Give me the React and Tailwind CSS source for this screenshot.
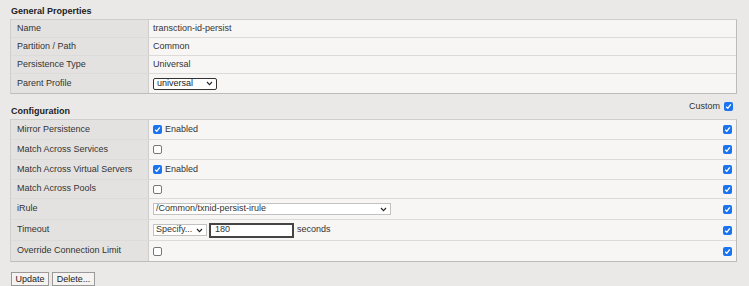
import React from 'react';

const font = { fontFamily: '"Liberation Sans", Arial, sans-serif' };

function Check({ on }) {
  if (!on) {
    return <span className="inline-block w-[9px] h-[9px] rounded-[2px] border border-[#777] bg-white shrink-0" />;
  }
  return (
    <span className="inline-flex items-center justify-center w-[9px] h-[9px] rounded-[2px] bg-[#1a73f0] shrink-0">
      <svg width="7" height="7" viewBox="0 0 7 7">
        <path d="M1.2 3.8 L2.8 5.3 L5.8 1.3" stroke="white" strokeWidth="1.4" fill="none" />
      </svg>
    </span>
  );
}

function Chevron() {
  return (
    <svg width="7" height="5" viewBox="0 0 7 5">
      <path d="M1 1 L3.5 3.6 L6 1" stroke="#222" strokeWidth="1.1" fill="none" />
    </svg>
  );
}

function Row({ label, h, children, custom, last }) {
  return (
    <div className={`flex ${h} ${last ? '' : 'border-b border-[#dddbd9]'}`}>
      <div className="w-[138px] shrink-0 bg-[#e4e2e0] border-r border-[#cfcdcb] pl-[6px] flex items-center">
        {label}
      </div>
      <div className="flex-1 bg-[#f8f6f5] pl-[4px] pr-[4px] flex items-center">
        <div className="flex-1 flex items-center">{children}</div>
        {custom && <Check on />}
      </div>
    </div>
  );
}

export default function App() {
  return (
    <div className="w-[749px] h-[286px] bg-[#ebe9e7] text-[#333] text-[9px] overflow-hidden" style={font}>
      <div className="pt-[6px] pl-[11px] font-bold text-[#222] h-[19px] leading-[11px]">General Properties</div>
      <div className="ml-[10px] w-[727px] border border-[#d0cecc] border-r-[#bebcba] border-b-[#bebcba]">
        <Row label="Name" h="h-[18px]">transction-id-persist</Row>
        <Row label="Partition / Path" h="h-[18px]">Common</Row>
        <Row label="Persistence Type" h="h-[18px]">Universal</Row>
        <Row label="Parent Profile" h="h-[19px]" last>
          <span className="w-[64px] h-[12px] border border-[#333] rounded-[2px] bg-white flex items-center justify-between pl-[3px] pr-[3px] text-[#222]">
            universal <Chevron />
          </span>
        </Row>
      </div>

      <div className="flex items-end justify-between h-[25px] pl-[11px] pr-[16px]">
        <span className="font-bold text-[#222] leading-[11px] mb-[2px]">Configuration</span>
        <span className="flex items-center gap-[4px] mb-[6px]">Custom <Check on /></span>
      </div>
      <div className="ml-[10px] w-[727px] border border-[#d0cecc] border-r-[#bebcba] border-b-[#bebcba]">
        <Row label="Mirror Persistence" h="h-[20px]" custom>
          <Check on /><span className="ml-[3px]">Enabled</span>
        </Row>
        <Row label="Match Across Services" h="h-[20px]" custom><Check /></Row>
        <Row label="Match Across Virtual Servers" h="h-[20px]" custom>
          <Check on /><span className="ml-[3px]">Enabled</span>
        </Row>
        <Row label="Match Across Pools" h="h-[19px]" custom><Check /></Row>
        <Row label="iRule" h="h-[21px]" custom>
          <span className="w-[238px] h-[12px] border border-[#c4c2c0] bg-white flex items-center justify-between pl-[2px] pr-[3px]">
            /Common/txnid-persist-irule <Chevron />
          </span>
        </Row>
        <Row label="Timeout" h="h-[21px]" custom>
          <span className="w-[54px] h-[12px] border border-[#c4c2c0] bg-white flex items-center justify-between pl-[2px] pr-[3px]">
            Specify... <Chevron />
          </span>
          <span className="ml-[2px] w-[85px] h-[15px] border-2 border-[#444] bg-white flex items-center pl-[4px]">180</span>
          <span className="ml-[3px]">seconds</span>
        </Row>
        <Row label="Override Connection Limit" h="h-[20px]" custom last><Check /></Row>
      </div>

      <div className="flex gap-[3px] pl-[11px] pt-[10px]">
        <button className="h-[14px] w-[38px] border border-[#9c9a98] bg-[#f4f3f2] text-[#222] text-[9px] leading-none">Update</button>
        <button className="h-[14px] w-[43px] border border-[#9c9a98] bg-[#f4f3f2] text-[#222] text-[9px] leading-none">Delete...</button>
      </div>
    </div>
  );
}
